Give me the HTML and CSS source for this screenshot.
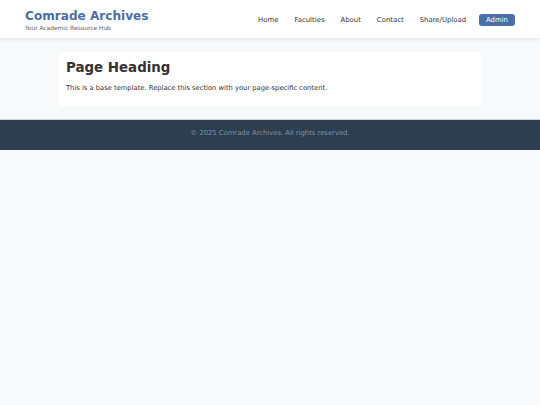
FILE: index.html
```html
<!DOCTYPE html>
<html lang="en">
<head>
<meta charset="utf-8">
<title>Comrade Archives</title>
<link rel="stylesheet" href="styles.css">
</head>
<body>
<header class="site-header">
  <div class="brand">
    <div class="brand-title">Comrade Archives</div>
    <div class="brand-sub">Your Academic Resource Hub</div>
  </div>
  <nav class="nav">
    <a class="nav-link" href="#">Home</a>
    <a class="nav-link" href="#">Faculties</a>
    <a class="nav-link" href="#">About</a>
    <a class="nav-link" href="#">Contact</a>
    <a class="nav-link" href="#">Share/Upload</a>
    <a class="nav-btn" href="#">Admin</a>
  </nav>
</header>
<main class="main">
  <section class="card">
    <h1 class="card-title">Page Heading</h1>
    <p class="card-text">This is a base template. Replace this section with your page-specific content.</p>
  </section>
</main>
<footer class="site-footer">
  <p class="footer-text">© 2025 Comrade Archives. All rights reserved.</p>
</footer>
</body>
</html>
```
FILE: styles.css
```css
html, body {
  margin: 0;
  padding: 0;
}
body {
  background: #f8f9fa;
  font-family: "DejaVu Sans", Verdana, sans-serif;
  color: #333;
  width: 540px;
  height: 405px;
}
.site-header {
  background: #fff;
  height: 38px;
  box-sizing: border-box;
  padding: 0 25px;
  display: flex;
  align-items: center;
  justify-content: space-between;
  box-shadow: 0 1px 4px rgba(0,0,0,0.1);
  position: relative;
}
.brand {
  margin-top: 2px;
}
.brand-title {
  font-size: 12.1px;
  font-weight: bold;
  color: #4a6fa5;
  line-height: 14px;
}
.brand-sub {
  font-size: 5.9px;
  color: #5f6368;
  line-height: 8px;
  margin-top: 1px;
}
.nav {
  display: flex;
  align-items: center;
  gap: 16px;
  margin-top: 1px;
}
.nav-link {
  font-size: 6.9px;
  color: #333;
  text-decoration: none;
}
.nav-btn {
  font-size: 6.9px;
  color: #fff;
  background: #4a6fa5;
  text-decoration: none;
  padding: 2px 7px;
  border-radius: 3px;
  line-height: 8px;
  margin-left: -3px;
}
.main {
  padding: 14px 59px 13px;
}
.card {
  background: #fff;
  border-radius: 4px;
  padding: 8px 7px 13px;
}
.card-title {
  margin: 0;
  font-size: 13.4px;
  font-weight: bold;
  color: #333;
  line-height: 16px;
}
.card-text {
  margin: 8px 0 0;
  font-size: 6.75px;
  color: #333;
  line-height: 9px;
}
.site-footer {
  background: #2c3e50;
  height: 31px;
  box-sizing: border-box;
  padding-top: 9px;
  text-align: center;
  border-top: 1px solid #c8ced4;
}
.footer-text {
  margin: 0;
  font-size: 6.8px;
  line-height: 9px;
  color: #8492a1;
}
```
